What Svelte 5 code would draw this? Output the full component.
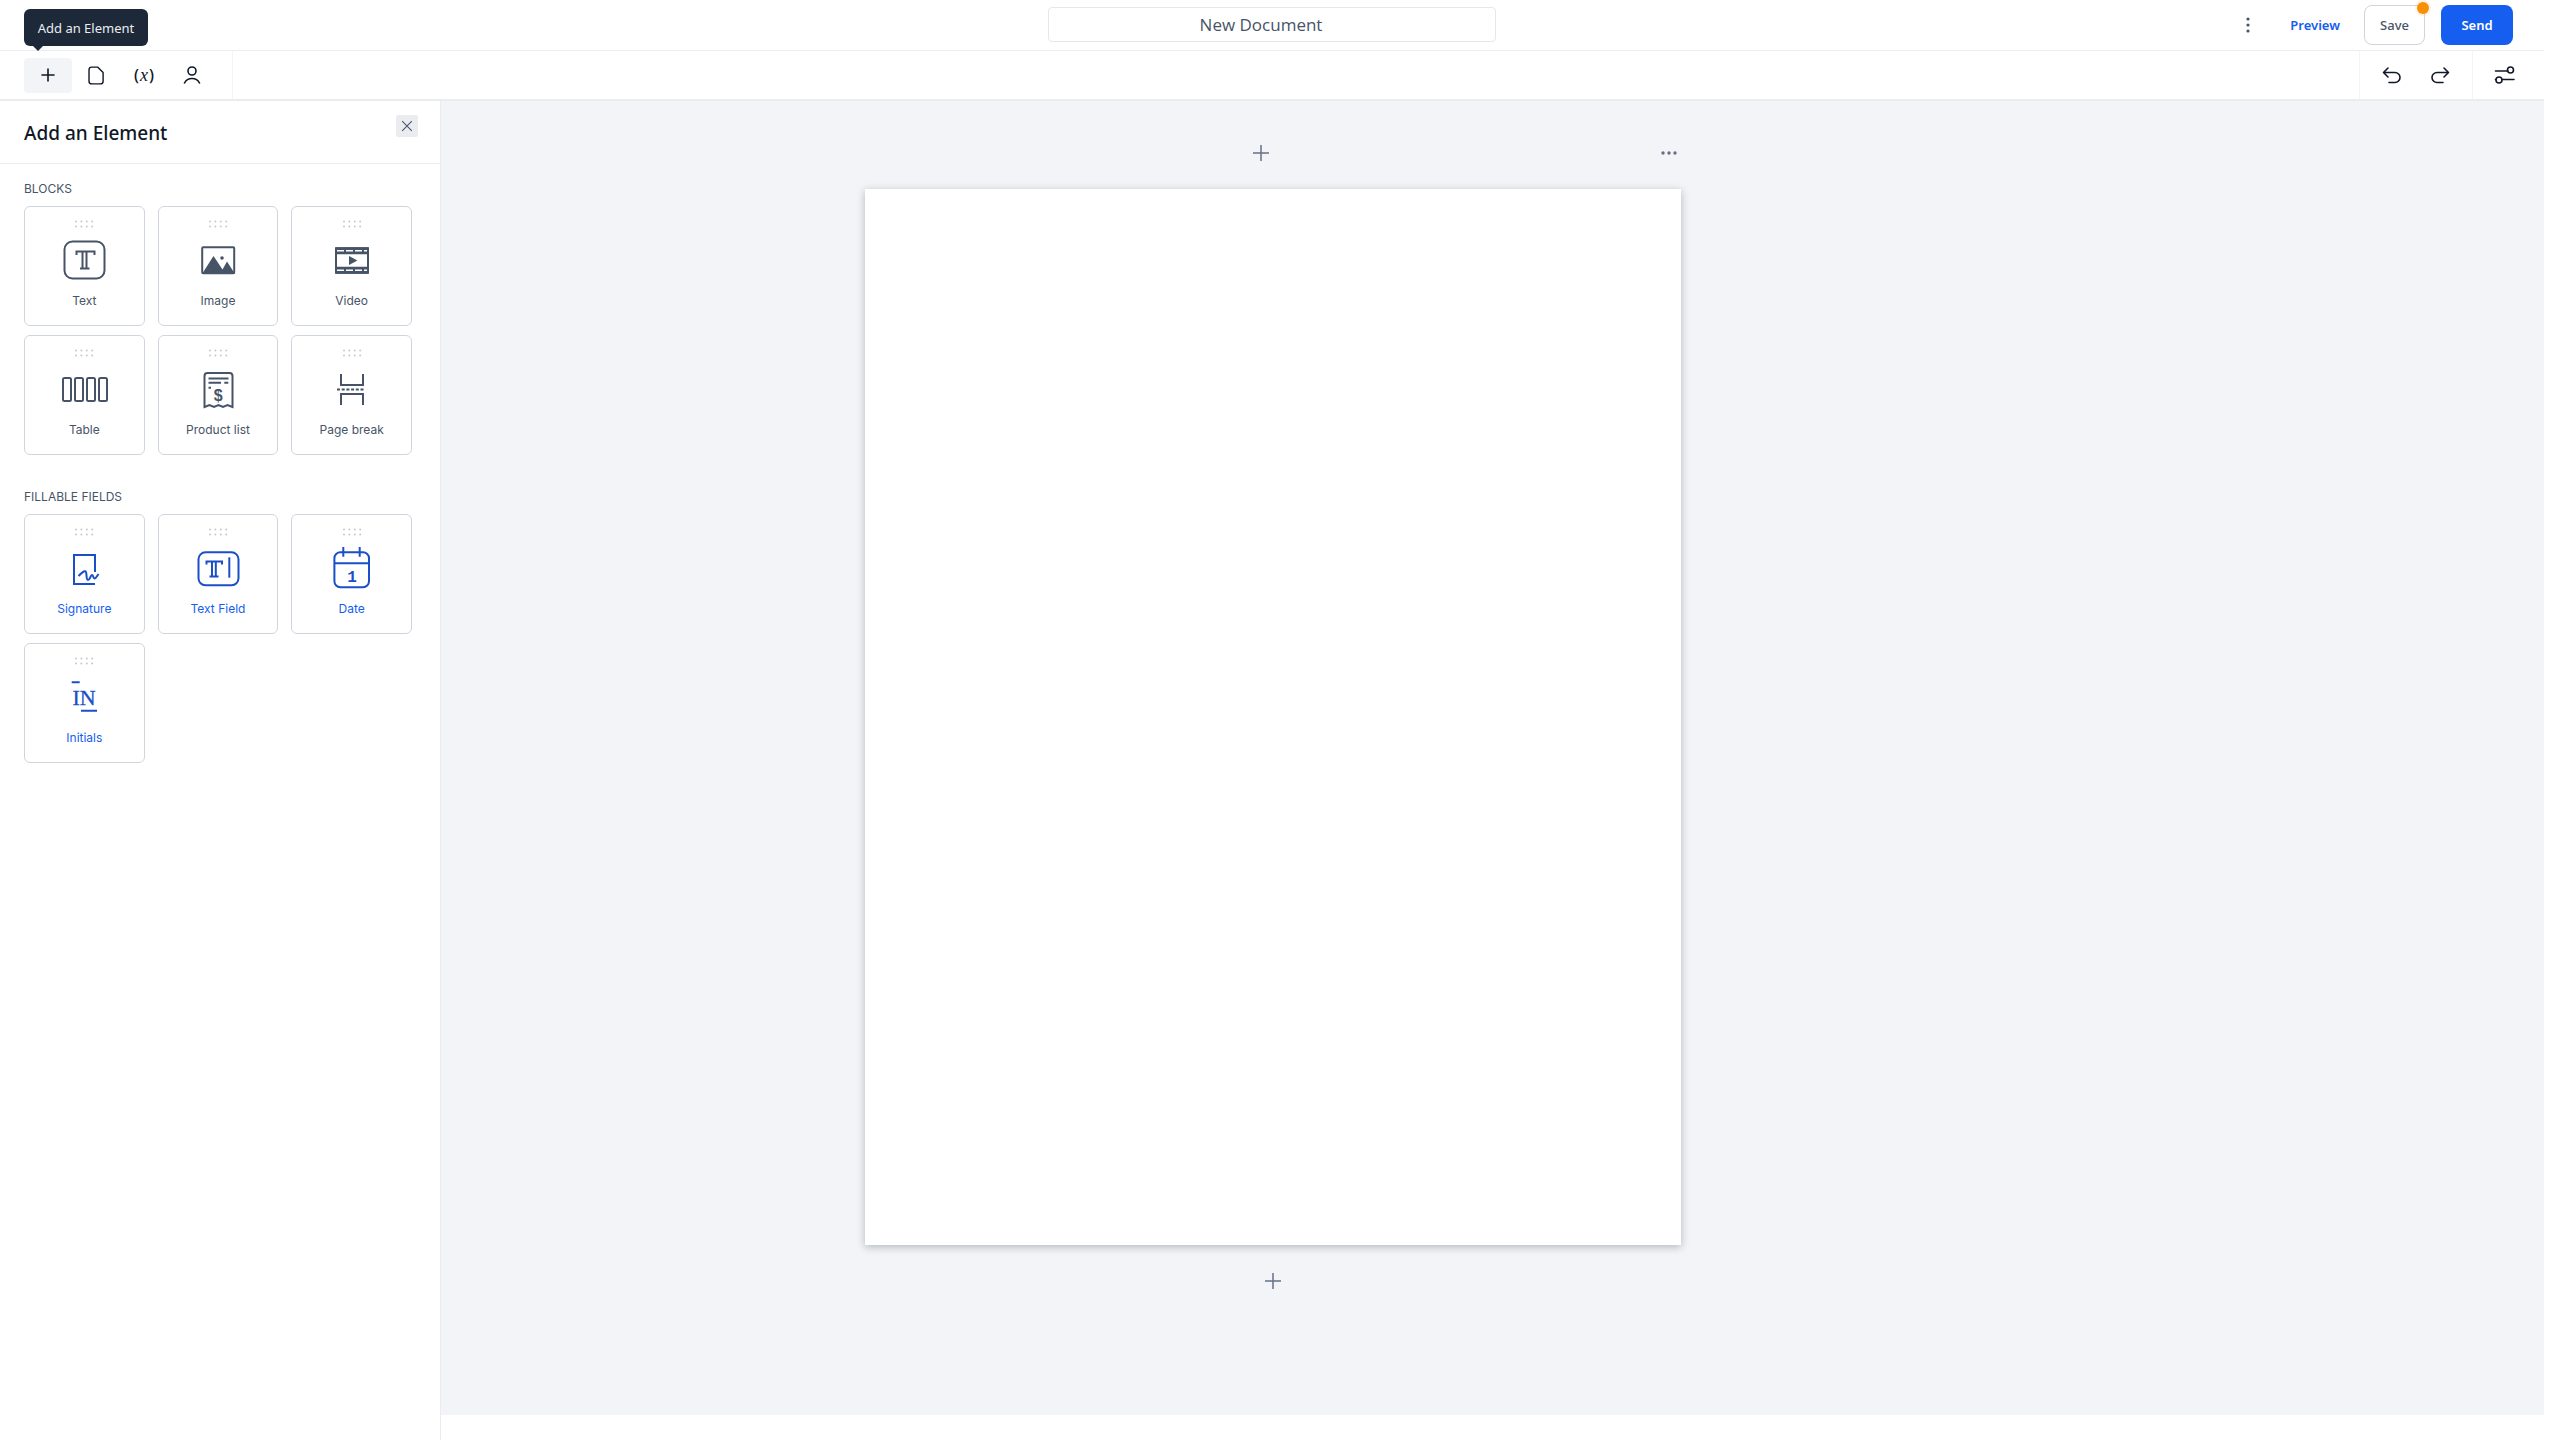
<script>
  const blocks = [
    { id: 'text', label: 'Text' },
    { id: 'image', label: 'Image' },
    { id: 'video', label: 'Video' },
    { id: 'table', label: 'Table' },
    { id: 'product', label: 'Product list' },
    { id: 'pagebreak', label: 'Page break' }
  ];

  const fields = [
    { id: 'signature', label: 'Signature' },
    { id: 'textfield', label: 'Text Field' },
    { id: 'date', label: 'Date' },
    { id: 'initials', label: 'Initials' }
  ];
</script>

{#snippet glyph(id)}
  <svg class="el-icon" viewBox="0 0 48 48" aria-hidden="true">
    {#if id === 'text'}
      <rect x="4.5" y="5.5" width="40" height="37" rx="8" class="line" />
      <path class="line" d="M16.5 19v-3.5h18V19M22.5 15.5v16.5M26.5 15.5v16.5M20 32.5h9.5" stroke-width="1.6" />
    {:else if id === 'image'}
      <rect x="8.2" y="11.2" width="32" height="26" rx="1" class="line" />
      <path class="solid" d="M8 38l11.5-18 9 13.5 4.5-8 8 12.5z" />
      <circle class="solid" cx="28" cy="22" r="1.8" />
    {:else if id === 'video'}
      <rect x="8" y="12.3" width="32" height="24.5" rx="1" class="line" />
      <path class="solid" d="M7 11.3h34v7H7zM7 30.8h34v7H7z" />
      <path class="hole" d="M9 14.8h30M9 34.3h30" stroke-dasharray="7 2" />
      <path class="solid" d="M21 20l8.4 4.5-8.4 4.5z" />
    {:else if id === 'table'}
      <rect x="3" y="13" width="8" height="23" rx="1.5" class="line" />
      <rect x="15" y="13" width="8" height="23" rx="1.5" class="line" />
      <rect x="27" y="13" width="8" height="23" rx="1.5" class="line" />
      <rect x="39" y="13" width="8" height="23" rx="1.5" class="line" />
    {:else if id === 'product'}
      <path class="line" d="M10.5 42V11a3 3 0 0 1 3-3h22a3 3 0 0 1 3 3v31l-5-2-4.5 2-4.5-2-4.5 2-4.5-2z" />
      <path class="line" d="M14.5 13.5h20M14.5 17.7h12.5M30.3 17.7h4M14.5 22.7h2.5" />
      <text class="icon-text" x="24.3" y="35.5" font-size="16" font-weight="700">$</text>
    {:else if id === 'pagebreak'}
      <path class="line" d="M13 9v11h22V9M13 40V29h22v11" />
      <path class="line" d="M9 24.5h27" stroke-dasharray="3 1.7" />
    {:else if id === 'signature'}
      <path class="line" d="M35 28V11H14v29h21" />
      <path class="line" d="M18.5 32c2.5-2.5 6.5-6.5 7.5-4 1 3 0 8 2 8s2.5-5 4-5 1 3.5 2.5 3.5 2.5-2.5 4-4.5" />
    {:else if id === 'textfield'}
      <rect x="4.5" y="8.3" width="40" height="33" rx="7" class="line" />
      <path class="line" d="M12.5 20.5v-3h15.5v3M18 17.5v15M21.8 17.5v15M15.5 32.5h9" stroke-width="1.6" />
      <path class="line" d="M35.3 13.3v20.4" />
    {:else if id === 'date'}
      <rect x="6.4" y="8.3" width="34.6" height="35" rx="6" class="line" />
      <path class="line" d="M6.4 19.3h34.6M15.3 3v9.7M31.7 3v9.7" />
      <text class="icon-text mono" x="24" y="37.5" font-size="16" font-weight="700">1</text>
    {:else if id === 'initials'}
      <path class="line" d="M11.7 9.3h8M21 37.7h16" />
      <text class="icon-text serif" x="24" y="32" font-size="22">IN</text>
    {/if}
  </svg>
{/snippet}

{#snippet card(item, accent)}
  <button class="card" class:accent type="button">
    <svg class="dots" viewBox="0 0 20 10" aria-hidden="true">
      {#each [0, 1] as row}
        {#each [0, 1, 2, 3] as col}
          <circle cx={2 + col * 5.4} cy={2.4 + row * 5.2} r="1" />
        {/each}
      {/each}
    </svg>
    {@render glyph(item.id)}
    <span>{item.label}</span>
  </button>
{/snippet}

<div class="editor">
  <header class="topbar">
    <div></div>
    <div class="doc-title">New Document</div>
    <div class="actions">
      <button class="kebab" type="button" aria-label="More">
        <svg viewBox="0 0 4 20" width="4" height="20" aria-hidden="true">
          <circle cx="2" cy="4" r="1.6" />
          <circle cx="2" cy="10" r="1.6" />
          <circle cx="2" cy="16" r="1.6" />
        </svg>
      </button>
      <button class="preview" type="button">Preview</button>
      <button class="save" type="button">
        Save
        <i class="unsaved"></i>
      </button>
      <button class="send" type="button">Send</button>
    </div>
  </header>

  <div class="toolbar">
    <div class="tools">
      <button class="tool active" type="button" aria-label="Add an Element">
        <svg viewBox="0 0 24 24" aria-hidden="true"><path d="M12 6v12M6 12h12" /></svg>
      </button>
      <button class="tool" type="button" aria-label="Document">
        <svg viewBox="0 0 24 24" aria-hidden="true"><path d="M7 3h7l6 6v10a3 3 0 0 1-3 3H7a3 3 0 0 1-3-3V6a3 3 0 0 1 3-3z" transform="translate(1.5 1.5) scale(.88)" /></svg>
      </button>
      <button class="tool var" type="button">(<em>x</em>)</button>
      <button class="tool" type="button" aria-label="Recipients">
        <svg viewBox="0 0 24 24" aria-hidden="true">
          <circle cx="12" cy="8" r="4" />
          <path d="M4.5 20c1.500-3 4-4.500 7.500-4.500s6 1.500 7.500 4.500" />
        </svg>
      </button>
      <div class="tip">Add an Element</div>
    </div>
    <div class="history">
      <button class="tool" type="button" aria-label="Undo">
        <svg viewBox="0 0 24 24" aria-hidden="true"><path d="M8 5L3.5 9.5 8 14M4 9.5h11a5 5 0 0 1 0 10H9" /></svg>
      </button>
      <button class="tool" type="button" aria-label="Redo">
        <svg viewBox="0 0 24 24" aria-hidden="true"><path d="M16 5l4.5 4.5L16 14M20 9.5H9a5 5 0 0 0 0 10h6" /></svg>
      </button>
    </div>
    <div class="settings">
      <button class="tool" type="button" aria-label="Settings">
        <svg viewBox="0 0 24 24" aria-hidden="true">
          <circle cx="17.5" cy="7" r="3" />
          <path d="M2 8h12.5M2 16.5h18.5" transform="translate(.5 0)" />
          <circle cx="6" cy="17" r="3" fill="#fff" />
        </svg>
      </button>
    </div>
  </div>

  <div class="workspace">
    <aside class="sidebar">
      <div class="side-head">
        <h2>Add an Element</h2>
        <button class="close" type="button" aria-label="Close">
          <svg viewBox="0 0 16 16" aria-hidden="true"><path d="M2.5 2.5l11 11M13.5 2.5l-11 11" /></svg>
        </button>
      </div>
      <div class="side-body">
        <h3>BLOCKS</h3>
        <div class="grid">
          {#each blocks as item}
            {@render card(item, false)}
          {/each}
        </div>
        <h3 class="second">FILLABLE FIELDS</h3>
        <div class="grid">
          {#each fields as item}
            {@render card(item, true)}
          {/each}
        </div>
      </div>
    </aside>

    <div class="stage">
      <main class="canvas">
        <div class="page-wrap">
          <div class="page-controls">
            <button class="page-btn" type="button" aria-label="Add page above">
              <svg viewBox="0 0 16 16" aria-hidden="true"><path d="M8 0v16M0 8h16" /></svg>
            </button>
            <button class="page-more" type="button" aria-label="Page options">
              <svg viewBox="0 0 20 6" width="20" height="6" aria-hidden="true">
                <circle cx="4" cy="3" r="1.7" />
                <circle cx="10" cy="3" r="1.7" />
                <circle cx="16" cy="3" r="1.7" />
              </svg>
            </button>
          </div>
          <div class="paper"></div>
          <button class="page-btn below" type="button" aria-label="Add page below">
            <svg viewBox="0 0 16 16" aria-hidden="true"><path d="M8 0v16M0 8h16" /></svg>
          </button>
        </div>
      </main>
      <div class="stage-foot"></div>
    </div>
  </div>
</div>

<style>
  :global(body) {
    background: #fff;
    overflow: hidden;
  }

  button {
    border: 0;
    background: none;
    padding: 0;
    font: inherit;
    color: inherit;
    cursor: pointer;
  }

  .editor {
    width: 2544px;
    height: 1440px;
    display: flex;
    flex-direction: column;
    font-family: 'Noto Sans', 'Open Sans', sans-serif;
    color: #101828;
  }

  .topbar {
    height: 51px;
    flex: none;
    box-sizing: border-box;
    border-bottom: 1px solid #eaecf0;
    display: grid;
    grid-template-columns: 1fr 448px 1fr;
    align-items: start;
  }

  .doc-title {
    margin-top: 7px;
    height: 35px;
    box-sizing: border-box;
    border: 1px solid #e4e7ec;
    border-radius: 4px;
    display: flex;
    align-items: center;
    justify-content: center;
    padding-right: 22px;
    font-family: 'Open Sans', sans-serif;
    font-size: 17px;
    color: #475467;
  }

  .actions {
    display: flex;
    justify-content: flex-end;
    align-items: center;
    height: 40px;
    margin-top: 5px;
    padding-right: 31px;
    font-size: 13px;
  }

  .kebab {
    display: flex;
    margin-right: 40px;
    fill: #475467;
  }

  .preview {
    color: #155eef;
    font-weight: 600;
    margin-right: 24px;
  }

  .save {
    position: relative;
    width: 61px;
    height: 40px;
    margin-right: 16px;
    box-sizing: border-box;
    border: 1px solid #d0d5dd;
    border-radius: 8px;
    color: #475467;
    font-weight: 500;
  }

  .unsaved {
    position: absolute;
    top: -4px;
    right: -5px;
    width: 12px;
    height: 12px;
    border-radius: 50%;
    background: #f79009;
    box-shadow: 0 0 0 2px rgba(247, 144, 9, 0.12);
  }

  .send {
    width: 72px;
    height: 40px;
    border-radius: 8px;
    background: #155eef;
    color: #fff;
    font-weight: 600;
  }

  .toolbar {
    height: 50px;
    flex: none;
    box-sizing: border-box;
    border-bottom: 2px solid #eaecf0;
    display: flex;
    align-items: stretch;
  }

  .tools {
    position: relative;
    width: 233px;
    box-sizing: border-box;
    padding-left: 24px;
    border-right: 1px solid #f2f4f7;
    display: flex;
    align-items: center;
    margin-right: auto;
  }

  .tool {
    width: 48px;
    height: 35px;
    display: flex;
    align-items: center;
    justify-content: center;
    border-radius: 4px;
  }

  .tool svg {
    width: 24px;
    height: 24px;
    fill: none;
    stroke: #101828;
    stroke-width: 1.6;
    stroke-linecap: round;
    stroke-linejoin: round;
  }

  .tool.active {
    background: #f2f4f7;
  }

  .tool.var {
    font-size: 16px;
    font-weight: 500;
  }

  .tool.var em {
    font-family: 'Liberation Serif', serif;
    font-size: 18px;
    margin: 0 1px;
  }

  .tip {
    position: absolute;
    left: 24px;
    top: -42px;
    width: 124px;
    height: 37px;
    border-radius: 6px;
    background: #1d2939;
    color: #eaecf0;
    font-size: 13px;
    display: flex;
    align-items: center;
    justify-content: center;
  }

  .tip::after {
    content: '';
    position: absolute;
    left: 9px;
    bottom: -5px;
    border: 5px solid transparent;
    border-bottom: 0;
    border-top-color: #1d2939;
  }

  .history {
    width: 113px;
    box-sizing: border-box;
    padding-left: 8px;
    border-left: 1px solid #f2f4f7;
    display: flex;
    align-items: center;
  }

  .settings {
    width: 72px;
    box-sizing: border-box;
    padding-left: 8px;
    border-left: 1px solid #f2f4f7;
    display: flex;
    align-items: center;
  }

  .workspace {
    flex: 1;
    display: flex;
    min-height: 0;
  }

  .sidebar {
    width: 441px;
    flex: none;
    box-sizing: border-box;
    border-right: 1px solid #eaecf0;
  }

  .side-head {
    height: 63px;
    box-sizing: border-box;
    border-bottom: 1px solid #eaecf0;
    padding: 14px 22px 0 24px;
    display: flex;
    justify-content: space-between;
    align-items: flex-start;
  }

  h2 {
    margin: 4px 0 0;
    font-size: 19px;
    line-height: 28px;
    font-weight: 500;
    color: #101828;
  }

  .close {
    width: 22px;
    height: 22px;
    background: #eaecf0;
    border-radius: 2px;
    display: flex;
    align-items: center;
    justify-content: center;
  }

  .close svg {
    width: 14px;
    height: 14px;
    fill: none;
    stroke: #475467;
    stroke-width: 1.2;
  }

  .side-body {
    padding: 17px 28px 0 24px;
  }

  h3 {
    margin: 0 0 9px;
    font-family: Inter, sans-serif;
    font-size: 12px;
    line-height: 16px;
    font-weight: 400;
    color: #475467;
  }

  h3.second {
    margin-top: 34px;
  }

  .grid {
    display: grid;
    grid-template-columns: repeat(3, 1fr);
    column-gap: 13px;
    row-gap: 9px;
  }

  .card {
    height: 120px;
    box-sizing: border-box;
    border: 1px solid #d0d5dd;
    border-radius: 6px;
    padding-top: 12px;
    display: flex;
    flex-direction: column;
    align-items: center;
    font-family: Inter, sans-serif;
    font-size: 12px;
    line-height: 16px;
    font-weight: 400;
    color: #475467;
  }

  .card.accent {
    color: #155eef;
  }

  .dots {
    width: 20px;
    height: 10px;
    fill: #c4c8d0;
    margin-bottom: 7px;
  }

  .el-icon {
    width: 48px;
    height: 48px;
    margin-bottom: 9px;
    color: #475467;
  }

  .card.accent .el-icon {
    color: #1a4fc9;
  }

  .line {
    fill: none;
    stroke: currentColor;
    stroke-width: 2;
  }

  .solid {
    fill: currentColor;
  }

  .hole {
    fill: none;
    stroke: #fff;
    stroke-width: 1.5;
  }

  .icon-text {
    fill: currentColor;
    text-anchor: middle;
    font-family: 'Liberation Sans', sans-serif;
  }

  .icon-text.mono {
    font-family: 'Liberation Mono', monospace;
  }

  .icon-text.serif {
    font-family: 'Liberation Serif', serif;
    stroke: currentColor;
    stroke-width: 0.3;
  }

  .stage {
    flex: 1;
    min-width: 0;
    display: flex;
    flex-direction: column;
  }

  .canvas {
    flex: 1;
    background: #f2f4f7;
  }

  .page-wrap {
    width: 816px;
    margin-left: 424px;
  }

  .page-controls {
    height: 88px;
    box-sizing: border-box;
    padding: 0 0 28px 388px;
    display: flex;
    align-items: flex-end;
  }

  .page-btn {
    width: 16px;
    height: 16px;
    display: flex;
  }

  .page-btn svg {
    width: 16px;
    height: 16px;
    fill: none;
    stroke: #667085;
    stroke-width: 1.5;
  }

  .page-btn.below {
    margin: 28px auto 0;
  }

  .page-more {
    margin-left: auto;
    margin-bottom: 5px;
    margin-right: 2px;
    display: flex;
    fill: #667085;
  }

  .paper {
    height: 1056px;
    background: #fff;
    box-shadow: 0 2px 8px rgba(16, 24, 40, 0.28);
  }

  .stage-foot {
    height: 25px;
    flex: none;
  }
</style>
